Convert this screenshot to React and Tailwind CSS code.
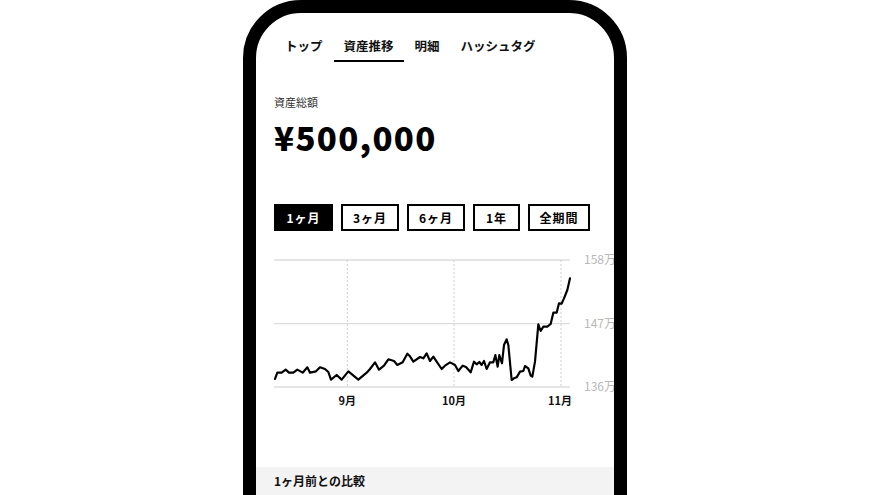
import React from "react";

const pts = [
  [45,402],[52,383],[65,383],[77,374],[87,383],[100,383],[112,374],[128,383],[142,367],[150,383],[168,379],[180,367],[195,372],[205,381],[213,404],[230,390],[245,404],[265,379],[295,404],[320,383],[330,372],[345,352],[357,374],[372,362],[385,343],[402,348],[412,360],[428,352],[442,326],[450,334],[460,350],[480,336],[490,340],[500,325],[510,348],[520,335],[530,350],[545,372],[555,362],[570,352],[585,360],[595,378],[608,362],[618,366],[632,382],[642,350],[650,358],[658,351],[665,360],[672,348],[680,372],[690,352],[700,352],[706,330],[713,365],[718,330],[726,355],[732,300],[740,283],[745,300],[755,405],[762,400],[770,397],[780,380],[790,378],[795,363],[805,370],[812,392],[817,395],[825,350],[835,238],[842,258],[850,245],[862,245],[872,237],[880,203],[890,203],[897,175],[905,176],[912,160],[922,135],[930,100]
];

const font = { fontFamily: '"Noto Sans CJK JP", "Noto Sans", sans-serif' };

function Chart() {
  const grid = [45, 236, 426];
  const labels = ["158万", "147万", "136万"];
  const vx = [262, 582, 903];
  const months = ["9月", "10月", "11月"];
  return (
    <svg width="346" height="170" viewBox="42 0 1038 510" className="block mt-[14px]">
      {grid.map((y) => (
        <line key={y} x1="42" x2="930" y1={y} y2={y} stroke="#dcdcdc" strokeWidth="4" />
      ))}
      {vx.map((x) => (
        <line key={x} x1={x} x2={x} y1="45" y2="426" stroke="#d0d0d0" strokeWidth="3" strokeDasharray="6 6" />
      ))}
      <polyline
        points={pts.map((p) => p.join(",")).join(" ")}
        fill="none"
        stroke="#000"
        strokeWidth="6.5"
        strokeLinejoin="round"
        strokeLinecap="round"
      />
      {grid.map((y, i) => (
        <text key={"l" + y} x="972" y={y + 13} fontSize="36" fill="#b8b8b8" style={font}>
          {labels[i]}
        </text>
      ))}
      {vx.map((x, i) => (
        <text key={"m" + x} x={i === 2 ? 900 : x} y="481" fontSize="33" fontWeight="700" fill="#111" textAnchor="middle" style={font}>
          {months[i]}
        </text>
      ))}
    </svg>
  );
}

export default function App() {
  const tabs = ["トップ", "資産推移", "明細", "ハッシュタグ"];
  const ranges = [
    ["1ヶ月", "w-[59px]", true],
    ["3ヶ月", "w-[58px]", false],
    ["6ヶ月", "w-[58px]", false],
    ["1年", "w-[47px]", false],
    ["全期間", "w-[62px]", false],
  ];
  return (
    <div className="w-[882px] h-[495px] overflow-hidden bg-white" style={font}>
      <div className="ml-[243px] w-[384px] h-[600px] border-[13px] border-black rounded-[58px] overflow-hidden bg-white">
        <div className="flex pl-[19px] pt-[24px] gap-[1px]">
          {tabs.map((t, i) => (
            <div
              key={t}
              className={
                "px-[10px] pb-[5px] text-[12.5px] leading-[18px] font-bold text-[#111] border-b-2 " +
                (i === 1 ? "border-black" : "border-transparent")
              }
            >
              {t}
            </div>
          ))}
        </div>
        <div className="px-[18px]">
          <div className="mt-[32px] text-[11px] leading-[16px] text-[#333]">資産総額</div>
          <div className="mt-[9px] text-[33px] leading-[36px] font-black text-black tracking-[1.3px]">¥500,000</div>
          <div className="mt-[49px] flex gap-[8px]">
            {ranges.map(([t, w, active]) => (
              <div
                key={t}
                className={
                  w +
                  " h-[27px] flex items-center justify-center border-2 border-black text-[12px] font-bold tracking-[1px] " +
                  (active ? "bg-black text-white" : "bg-white text-black")
                }
              >
                {t}
              </div>
            ))}
          </div>
          <Chart />
        </div>
        <div className="mt-[52px] bg-[#f3f3f3] px-[18px] pt-[5px] h-[60px] text-[12px] leading-[18px] font-bold text-[#111]">
          1ヶ月前との比較
        </div>
      </div>
    </div>
  );
}
